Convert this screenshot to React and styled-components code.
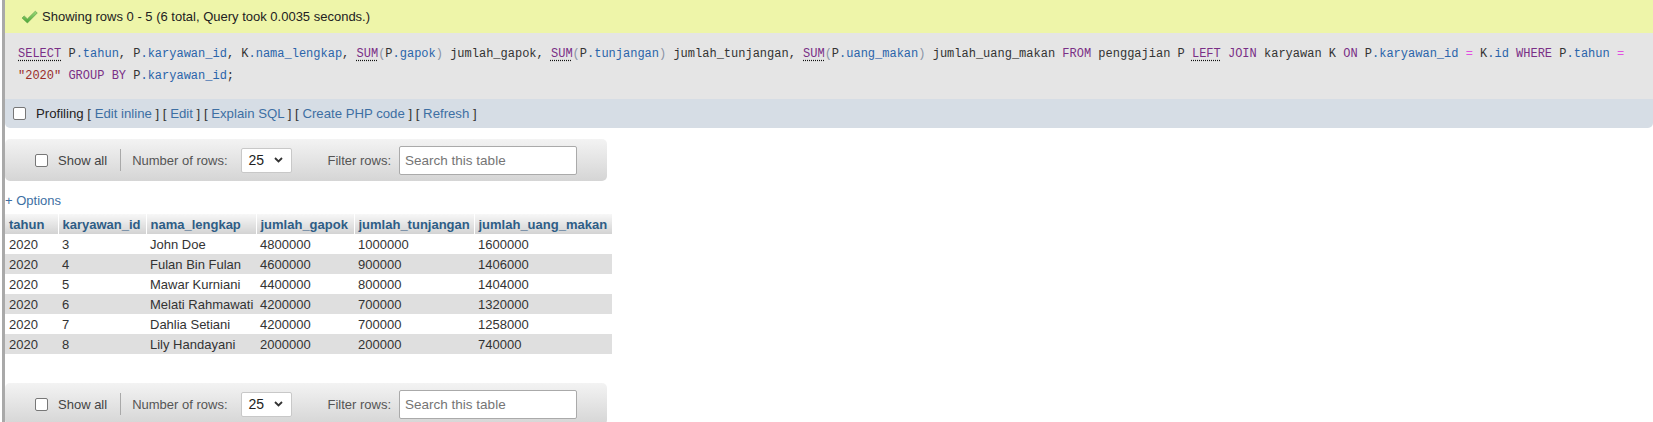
import React from 'react'
import styled, { createGlobalStyle } from 'styled-components'

const GlobalStyle = createGlobalStyle`
  html, body {
    margin: 0;
    padding: 0;
    background: #fff;
  }
  body {
    font-family: "Liberation Sans", Arial, sans-serif;
    font-size: 13px;
    color: #333;
  }
`

const Page = styled.div`
  margin-left: 2px;
  border-left: 3px solid #a9a9a9;
  min-height: 100vh;
  overflow: hidden;
`

const SuccessBar = styled.div`
  height: 33px;
  background: #eef5a9;
  display: flex;
  align-items: center;
  padding-left: 16px;
  color: #222;
`

const SuccessIcon = styled.svg`
  width: 17px;
  height: 15px;
  margin-right: 4px;
  margin-top: 1px;
`

const SqlBox = styled.div`
  background: #e5e5e5;
  padding: 10px 14px 12px 13px;
  font-family: "Liberation Mono", "DejaVu Sans Mono", monospace;
  font-size: 12px;
  line-height: 22px;
  color: #333;
`

const Tok = styled.span`
  color: ${p => ({
    kw: '#7a2f86',
    prop: '#2a64aa',
    op: '#e24fe0',
    str: '#9a2d2b',
    br: '#8a93a6',
  }[p.$t] || '#333')};
  ${p => p.$doc && `
    text-decoration: underline dotted #111;
    text-underline-offset: 3px;
  `}
`

const ProfilingBar = styled.div`
  height: 29px;
  background: #d6dde5;
  border-radius: 0 0 5px 5px;
  display: flex;
  align-items: center;
  padding-left: 8px;
  color: #222;
  font-size: 13.2px;
`

const Check = styled.span`
  display: inline-block;
  box-sizing: border-box;
  width: 13px;
  height: 13px;
  border: 1px solid #777;
  border-radius: 2px;
  background: #fff;
  margin-right: ${p => p.$gap || 10}px;
`

const Link = styled.a`
  color: #3d6fa3;
  text-decoration: none;
`

const Bracket = styled.span`
  color: #333;
`

const Body = styled.div`
  padding-top: 11px;
`

const NavBar = styled.div`
  width: 602px;
  height: 42px;
  box-sizing: border-box;
  border-radius: 5px;
  background: linear-gradient(#f3f3f3, #d5d5d5);
  display: flex;
  align-items: center;
  padding-left: 30px;
  color: #444;
`

const Divider = styled.span`
  width: 1px;
  height: 22px;
  background: #a9a9a9;
  margin: 0 11px 0 13px;
`

const Label = styled.span`
  color: ${p => p.$muted ? '#555' : '#444'};
  margin-left: ${p => p.$ml || 0}px;
`

const SelectBox = styled.div`
  box-sizing: border-box;
  width: 51px;
  height: 25px;
  margin-left: 13px;
  border: 1px solid #c8c8c8;
  border-radius: 2px;
  background: #fff;
  display: flex;
  align-items: center;
  justify-content: space-between;
  padding: 0 8px 0 7px;
  color: #222;
  font-size: 14px;
`

const SearchInput = styled.input`
  box-sizing: border-box;
  width: 178px;
  height: 29px;
  margin-left: 8px;
  border: 1px solid #aaa;
  border-radius: 2px;
  padding: 0 5px;
  font-family: "Liberation Sans", Arial, sans-serif;
  font-size: 13.5px;
  color: #222;
  &::placeholder {
    color: #757575;
  }
`

const Options = styled.a`
  display: block;
  margin-top: 12px;
  line-height: 16px;
  color: #3d6fa3;
  text-decoration: none;
`

const Table = styled.table`
  margin-top: 5px;
  border-collapse: collapse;
  table-layout: fixed;
  width: 607px;
`

const Th = styled.th`
  height: 20px;
  padding: 0 4px;
  text-align: left;
  font-weight: bold;
  color: #2e5d86;
  white-space: nowrap;
  background: linear-gradient(#f7f7f7, #d3d3d3);
  border-left: 1px solid #fff;
  &:first-child {
    border-left: 0;
  }
`

const Row = styled.tr`
  background: ${p => p.$odd ? '#dfdfdf' : '#fff'};
`

const Td = styled.td`
  height: 20px;
  padding: 0 4px;
  white-space: nowrap;
  color: #333;
`

const BottomNav = styled.div`
  margin-top: 29px;
`

const sql = [
  ['SELECT', 'kw', 1], [' '], ['P'], ['.tahun', 'prop'], [', '], ['P'], ['.karyawan_id', 'prop'], [', '],
  ['K'], ['.nama_lengkap', 'prop'], [', '], ['SUM', 'kw', 1], ['(', 'br'], ['P'], ['.gapok', 'prop'], [')', 'br'],
  [' jumlah_gapok, '], ['SUM', 'kw', 1], ['(', 'br'], ['P'], ['.tunjangan', 'prop'], [')', 'br'],
  [' jumlah_tunjangan, '], ['SUM', 'kw', 1], ['(', 'br'], ['P'], ['.uang_makan', 'prop'], [')', 'br'],
  [' jumlah_uang_makan '], ['FROM', 'kw'], [' penggajian P '], ['LEFT', 'kw', 1], [' '], ['JOIN', 'kw'],
  [' karyawan K '], ['ON', 'kw'], [' '], ['P'], ['.karyawan_id', 'prop'], [' '], ['=', 'op'], [' '],
  ['K'], ['.id', 'prop'], [' '], ['WHERE', 'kw'], [' '], ['P'], ['.tahun', 'prop'], [' '], ['=', 'op'], [' '],
  ['"2020"', 'str'], [' '], ['GROUP BY', 'kw'], [' '], ['P'], ['.karyawan_id', 'prop'], [';'],
]

const links = ['Edit inline', 'Edit', 'Explain SQL', 'Create PHP code', 'Refresh']

const columns = [
  { name: 'tahun', width: 53 },
  { name: 'karyawan_id', width: 88 },
  { name: 'nama_lengkap', width: 110 },
  { name: 'jumlah_gapok', width: 98 },
  { name: 'jumlah_tunjangan', width: 120 },
  { name: 'jumlah_uang_makan', width: 138 },
]

const rows = [
  ['2020', '3', 'John Doe', '4800000', '1000000', '1600000'],
  ['2020', '4', 'Fulan Bin Fulan', '4600000', '900000', '1406000'],
  ['2020', '5', 'Mawar Kurniani', '4400000', '800000', '1404000'],
  ['2020', '6', 'Melati Rahmawati', '4200000', '700000', '1320000'],
  ['2020', '7', 'Dahlia Setiani', '4200000', '700000', '1258000'],
  ['2020', '8', 'Lily Handayani', '2000000', '200000', '740000'],
]

const Chevron = () => (
  <svg width="9" height="6" viewBox="0 0 9 6">
    <path d="M1 1 L4.5 4.5 L8 1" fill="none" stroke="#333" strokeWidth="1.8" />
  </svg>
)

const Navigation = () => (
  <NavBar>
    <Check $gap={10} />
    <Label>Show all</Label>
    <Divider />
    <Label $muted>Number of rows:</Label>
    <SelectBox>
      <span>25</span>
      <Chevron />
    </SelectBox>
    <Label $muted $ml={36}>Filter rows:</Label>
    <SearchInput placeholder="Search this table" />
  </NavBar>
)

const App = () => {
  return (
    <Page>
      <GlobalStyle />
      <SuccessBar>
        <SuccessIcon viewBox="0 0 16 14">
          <defs>
            <linearGradient id="ok" x1="0" y1="0" x2="0" y2="1">
              <stop offset="0" stopColor="#9bd97a" />
              <stop offset="1" stopColor="#4ba535" />
            </linearGradient>
          </defs>
          <path d="M1 7.5 L3 5.5 L6 8.3 L13.5 1 L15.3 2.8 L6 12.2 Z" fill="url(#ok)" stroke="#5a9f45" strokeWidth="0.6" />
        </SuccessIcon>
        Showing rows 0 - 5 (6 total, Query took 0.0035 seconds.)
      </SuccessBar>
      <SqlBox>
        {sql.map(([text, t, doc], i) => (
          <Tok key={i} $t={t} $doc={doc}>{text}</Tok>
        ))}
      </SqlBox>
      <ProfilingBar>
        <Check $gap={10} />
        <span>
          Profiling
          {links.map(l => (
            <React.Fragment key={l}>
              {' '}<Bracket>[ </Bracket><Link href="#">{l}</Link><Bracket> ]</Bracket>
            </React.Fragment>
          ))}
        </span>
      </ProfilingBar>
      <Body>
        <Navigation />
        <Options href="#">+ Options</Options>
        <Table>
          <colgroup>
            {columns.map(c => <col key={c.name} width={c.width} />)}
          </colgroup>
          <thead>
            <tr>
              {columns.map(c => <Th key={c.name}>{c.name}</Th>)}
            </tr>
          </thead>
          <tbody>
            {rows.map((r, i) => (
              <Row key={i} $odd={i % 2 === 1}>
                {r.map((v, j) => <Td key={j}>{v}</Td>)}
              </Row>
            ))}
          </tbody>
        </Table>
        <BottomNav>
          <Navigation />
        </BottomNav>
      </Body>
    </Page>
  )
}

export default App
